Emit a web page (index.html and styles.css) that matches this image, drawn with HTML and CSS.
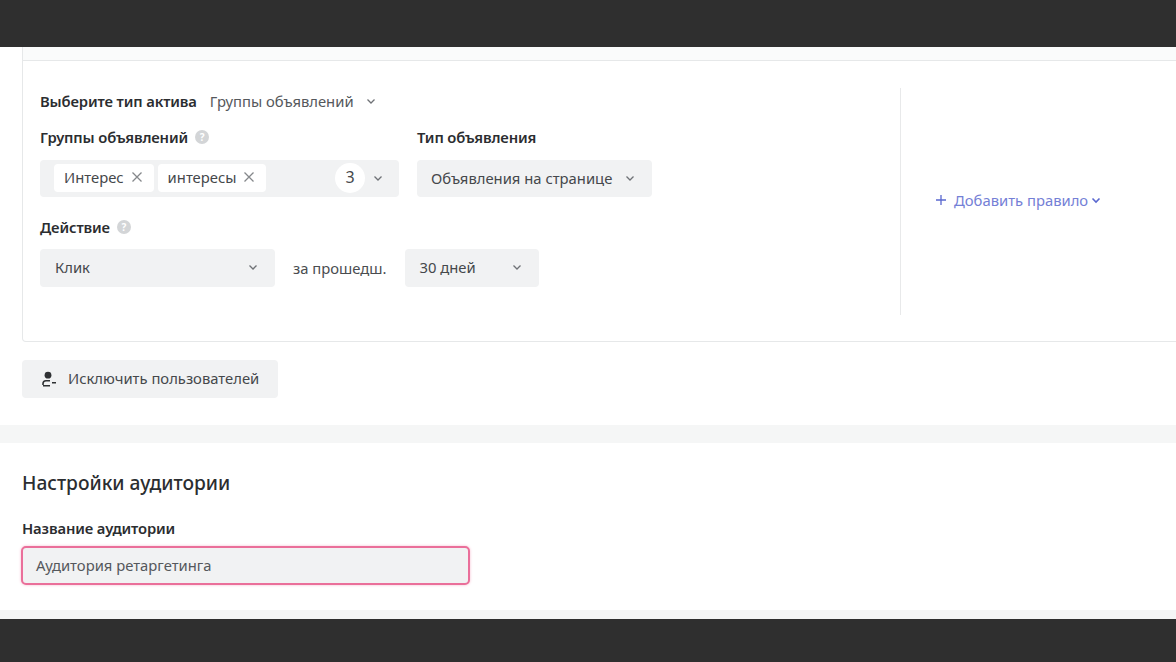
FILE: index.html
```html
<!DOCTYPE html>
<html lang="ru">
<head>
<meta charset="utf-8">
<title>Настройки аудитории</title>
<link rel="stylesheet" href="styles.css">
</head>
<body>
<header class="bar bar-top"></header>
<main class="page">
  <section class="panel panel-rules">
    <div class="card">
      <div class="card-strip"></div>
      <div class="card-body">
        <div class="rule">
          <div class="asset-row">
            <span class="label">Выберите тип актива</span>
            <span class="asset-value">Группы объявлений</span>
            <svg class="chev" viewBox="0 0 12 12"><path d="M2.5 4.5 6 8l3.5-3.5"/></svg>
          </div>
          <div class="fields">
            <div class="field field-groups">
              <div class="label-line"><span class="label">Группы объявлений</span><span class="help">?</span></div>
              <div class="select select-tags">
                <span class="tag">Интерес<svg class="x" viewBox="0 0 12 12"><path d="M1.5 1.5l9 9M10.5 1.5l-9 9"/></svg></span>
                <span class="tag">интересы<svg class="x" viewBox="0 0 12 12"><path d="M1.5 1.5l9 9M10.5 1.5l-9 9"/></svg></span>
                <span class="count">3</span>
                <svg class="chev" viewBox="0 0 12 12"><path d="M2.5 4.5 6 8l3.5-3.5"/></svg>
              </div>
            </div>
            <div class="field">
              <div class="label-line"><span class="label">Тип объявления</span></div>
              <div class="select select-type">
                <span>Объявления на странице</span>
                <svg class="chev" viewBox="0 0 12 12"><path d="M2.5 4.5 6 8l3.5-3.5"/></svg>
              </div>
            </div>
          </div>
          <div class="label-line label-action"><span class="label">Действие</span><span class="help">?</span></div>
          <div class="action-row">
            <div class="select select-action">
              <span>Клик</span>
              <svg class="chev" viewBox="0 0 12 12"><path d="M2.5 4.5 6 8l3.5-3.5"/></svg>
            </div>
            <span class="period">за прошедш.</span>
            <div class="select select-days">
              <span>30 дней</span>
              <svg class="chev" viewBox="0 0 12 12"><path d="M2.5 4.5 6 8l3.5-3.5"/></svg>
            </div>
          </div>
        </div>
        <div class="add-side">
          <div class="add-rule">
            <svg class="plus" viewBox="0 0 12 12"><path d="M6 1v10M1 6h10"/></svg>
            <span>Добавить правило</span>
            <svg class="chev chev-add" viewBox="0 0 12 12"><path d="M2.5 4.5 6 8l3.5-3.5"/></svg>
          </div>
        </div>
      </div>
    </div>
    <button class="exclude" type="button">
      <svg class="user" viewBox="0 0 16 16"><circle cx="7" cy="4.2" r="3.4"/><path class="user-body" d="M2 14v-1.2C2 10.9 3.4 9.8 5 9.8h4"/><path class="user-body" d="M2 14.7h7M11 11.8h4"/></svg>
      <span>Исключить пользователей</span>
    </button>
  </section>
  <section class="panel panel-settings">
    <h2 class="title">Настройки аудитории</h2>
    <div class="label name-label">Название аудитории</div>
    <div class="name-input">Аудитория ретаргетинга</div>
  </section>
</main>
<footer class="bar bar-bottom"></footer>
</body>
</html>
```
FILE: styles.css
```css
* { box-sizing: border-box; }
html, body { margin: 0; height: 662px; overflow: hidden; }
body {
  display: flex;
  flex-direction: column;
  background: #f5f6f6;
  color: #3c3e41;
  font: 14.8px/20px "Noto Sans", "Open Sans", sans-serif;
}
.bar { background: #2f2f2f; flex: none; }
.bar-top { height: 47px; }
.bar-bottom { height: 43px; }
.page { flex: 1; display: flex; flex-direction: column; gap: 18px; padding-bottom: 9px; }
.panel { background: #fff; }
.panel-rules { height: 378px; padding-left: 22px; }
.panel-settings { flex: 1; padding: 28px 22px 0; }
.card {
  margin-right: -8px;
  height: 295px;
  border: 1px solid #e6e8e9;
  border-top: 0;
  border-radius: 0 0 4px 4px;
}
.card-strip { height: 14px; background: #fafbfb; border-bottom: 1px solid #e6e8e9; }
.card-body { display: flex; padding: 27px 0 0 17px; }
.rule { width: 861px; height: 227px; border-right: 1px solid #e8e9ea; }
.label { font-weight: 600; color: #2b2d30; letter-spacing: -0.13px; }
.asset-row { display: flex; align-items: center; height: 26px; }
.asset-value { margin-left: 13px; color: #55585c; }
.asset-row .chev { margin-left: 11px; }
.chev { width: 12px; height: 12px; flex: none; fill: none; stroke: #6f7276; stroke-width: 1.3; }
.fields { display: flex; gap: 18px; margin-top: 13px; }
.label-line { display: flex; align-items: center; gap: 7px; height: 20px; }
.help {
  width: 14px; height: 14px; border-radius: 50%;
  background: #d3d5d7; color: #fff;
  font-size: 10px; line-height: 14px; text-align: center; font-weight: 700;
}
.select {
  display: flex; align-items: center;
  height: 37px; margin-top: 13px; padding-bottom: 2px;
  background: #f1f2f3; border-radius: 4px;
  color: #45484b;
}
.select-tags { width: 359px; padding: 0 15px 1px 14px; gap: 4px; }
.tag {
  display: flex; align-items: center; gap: 7px;
  height: 28px; padding: 0 11px 2px 10px;
  background: #fff; border-radius: 4px;
}
.x { width: 12px; height: 12px; fill: none; stroke: #85888b; stroke-width: 1.3; }
.count {
  margin-left: auto; width: 30px; height: 30px; border-radius: 50%;
  background: #fff; text-align: center; line-height: 28px; font-size: 16px;
}
.select-tags .chev { margin-left: 3px; margin-bottom: 1px; }
.select-type { width: 235px; padding: 0 16px 2px 14px; justify-content: space-between; }
.label-action { margin-top: 20px; }
.action-row { display: flex; align-items: center; margin-top: 12px; }
.action-row .select { margin-top: 0; height: 38px; }
.select-action { width: 235px; padding: 0 16px 2px 15px; justify-content: space-between; }
.period { margin: 0 19px 1px 18px; color: #4a4d50; }
.select-days { width: 134px; padding: 0 16px 2px 14px; justify-content: space-between; }
.add-side { display: flex; align-items: center; padding-left: 34px; height: 223px; }
.add-rule { display: flex; align-items: center; color: #7480d6; gap: 7px; }
.plus { width: 12px; height: 12px; fill: none; stroke: #5a68cf; stroke-width: 1.3; }
.chev-add { margin-left: -5px; stroke: #5a68cf; stroke-width: 1.6; }
.exclude {
  display: flex; align-items: center; gap: 11px;
  width: 256px; height: 38px; margin-top: 18px; padding: 0 0 2px 19px;
  border: 0; border-radius: 4px; background: #f1f2f3;
  color: #45484b; font: inherit;
}
.user { width: 16px; height: 16px; flex: none; fill: #2f3133; margin-top: 2px; }
.user-body { fill: none; stroke: #2f3133; stroke-width: 1.6; }
.title { margin: 0; font-size: 19.2px; line-height: 24px; font-weight: 500; color: #2b2d30; }
.name-label { margin-top: 23px; }
.name-input {
  width: 449px; height: 39px; margin-top: 8px; margin-left: -1px; padding: 0 0 2px 13px;
  display: flex; align-items: center;
  background: #f1f2f3; border: 2px solid #ea6f9a; border-radius: 5px;
  box-shadow: 0 0 3px #f7bccf;
  color: #55585c;
}
```
